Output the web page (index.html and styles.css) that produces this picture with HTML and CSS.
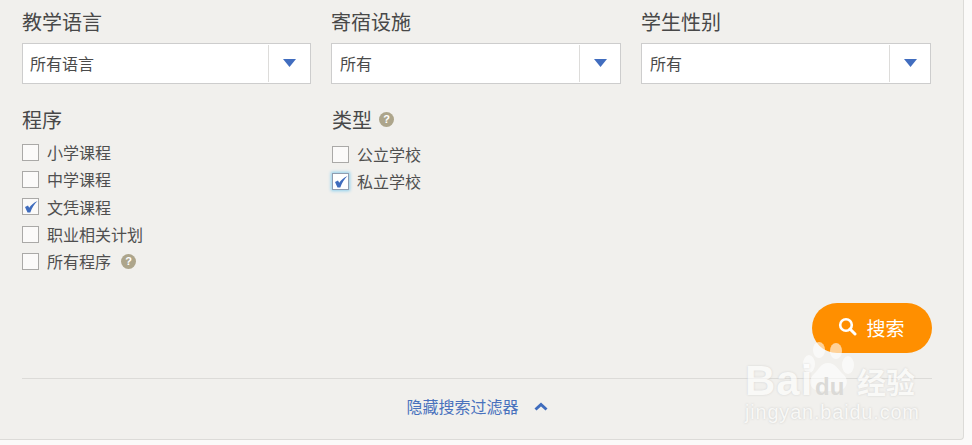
FILE: index.html
```html
<!DOCTYPE html>
<html lang="zh">
<head>
<meta charset="utf-8">
<title>搜索过滤器</title>
<link rel="stylesheet" href="styles.css">
</head>
<body>
<div class="panel">
  <div class="selects">
    <div class="field">
      <div class="label">教学语言</div>
      <div class="select"><span class="value">所有语言</span><span class="arrow"><svg width="13" height="8" viewBox="0 0 13 8"><path d="M0 0h13L6.500 8z"/></svg></span></div>
    </div>
    <div class="field">
      <div class="label">寄宿设施</div>
      <div class="select"><span class="value">所有</span><span class="arrow"><svg width="13" height="8" viewBox="0 0 13 8"><path d="M0 0h13L6.500 8z"/></svg></span></div>
    </div>
    <div class="field">
      <div class="label">学生性别</div>
      <div class="select"><span class="value">所有</span><span class="arrow"><svg width="13" height="8" viewBox="0 0 13 8"><path d="M0 0h13L6.500 8z"/></svg></span></div>
    </div>
  </div>
  <div class="groups">
    <div class="group">
      <div class="label glabel">程序</div>
      <div class="checks">
        <div class="check"><span class="box"></span>小学课程</div>
        <div class="check"><span class="box"></span>中学课程</div>
        <div class="check"><span class="box"><svg class="tick" width="14" height="13" viewBox="0 0 14 13"><path d="M1 7 4 5.500l1.200 2.300C7 5 10 2.500 13.500 1 10.500 4 8 7.500 6.300 12.500H3.500z"/></svg></span>文凭课程</div>
        <div class="check"><span class="box"></span>职业相关计划</div>
        <div class="check"><span class="box"></span>所有程序<span class="help helpm">?</span></div>
      </div>
    </div>
    <div class="group">
      <div class="label glabel typelabel">类型<span class="help helpt">?</span></div>
      <div class="checks">
        <div class="check"><span class="box"></span>公立学校</div>
        <div class="check"><span class="box focus"><svg class="tick" width="14" height="13" viewBox="0 0 14 13"><path d="M1 7 4 5.500l1.200 2.300C7 5 10 2.500 13.500 1 10.500 4 8 7.500 6.300 12.500H3.500z"/></svg></span>私立学校</div>
      </div>
    </div>
  </div>
  <div class="actions">
    <button class="search"><svg width="19" height="19" viewBox="0 0 19 19"><circle cx="8" cy="8" r="5.800" fill="none" stroke="#fff" stroke-width="2.600"/><path d="M12 12l5 5" stroke="#fff" stroke-width="3" stroke-linecap="round"/></svg><span>搜索</span></button>
  </div>
  <div class="footer">
    <a class="toggle">隐藏搜索过滤器<svg width="14" height="9" viewBox="0 0 14 9"><path d="M1.500 7.500 7 2.500l5.500 5" fill="none" stroke="#3f6cbd" stroke-width="3"/></svg></a>
  </div>
</div>
<div class="watermark">
  <svg class="paw" width="52" height="50" viewBox="0 0 52 50"><g fill="#fff" fill-opacity=".6"><ellipse cx="16" cy="8" rx="6" ry="8"/><ellipse cx="33" cy="9" rx="6" ry="8"/><ellipse cx="6" cy="22" rx="6" ry="9"/><ellipse cx="45" cy="23" rx="6" ry="9"/><path d="M25 21c8 0 10 7 16 12 6 6 2 16-7 16H17C8 49 4 39 10 33c6-5 7-12 15-12z"/></g></svg>
  <span class="wm-bai">Bai</span><span class="wm-du">du</span><span class="wm-cn">经验</span>
  <span class="wm-url">jingyan.baidu.com</span>
</div>
</body>
</html>
```
FILE: styles.css
```css
* { box-sizing: border-box; }
html, body { margin: 0; padding: 0; }
body {
  width: 972px;
  height: 445px;
  position: relative;
  overflow: hidden;
  background: #fbfaf9;
  font-family: "Noto Sans CJK SC", "Noto Sans", sans-serif;
  color: #4a4a4a;
}
.panel {
  width: 964px;
  height: 440px;
  background: #f1f0ed;
  border-right: 1px solid #dcdbd8;
  border-bottom: 1px solid #dcdbd8;
  border-bottom-right-radius: 4px;
  padding: 8px 31px 0 22px;
}
.selects {
  display: grid;
  grid-template-columns: 289px 290px 290px;
  column-gap: 20px;
}
.label {
  font-size: 20px;
  line-height: 28px;
  height: 35px;
  color: #484848;
}
.select {
  display: flex;
  height: 41px;
  background: #fff;
  border: 1px solid #cdcdcd;
  font-size: 16px;
}
.value {
  flex: 1;
  padding-left: 7px;
  line-height: 39px;
  color: #4a4a4a;
}
.arrow {
  width: 42px;
  margin: 1px 0;
  border-left: 1px solid #dddcda;
  display: flex;
  align-items: center;
  justify-content: center;
  padding-bottom: 1px;
}
.field + .field .value { padding-left: 8px; }
.field + .field .arrow { width: 41px; }
.arrow svg { fill: #416dbf; }
.groups {
  display: flex;
  margin-top: 22px;
}
.group { width: 310px; }
.glabel {
  height: 32.500px;
  line-height: 28px;
}
.typelabel {
  display: flex;
  align-items: flex-start;
  height: 34.500px;
}
.check {
  display: flex;
  align-items: center;
  height: 27.300px;
  font-size: 16px;
  color: #4f4f4f;
}
.box {
  width: 17px;
  height: 17px;
  margin-right: 8px;
  flex: none;
  background: #fbfaf9;
  border: 1px solid #aaa9a7;
  display: flex;
  align-items: center;
  justify-content: center;
}
.focus {
  border-color: #8f9db0;
  box-shadow: 0 0 3px 1px #8fd0ee;
  background: #fff;
}
.tick { fill: #3f6cbd; }
.help {
  width: 15px;
  height: 15px;
  border-radius: 50%;
  background: #ada58b;
  color: #fff;
  font: bold 11px/15px "Liberation Sans", sans-serif;
  text-align: center;
  flex: none;
}
.helpm { margin-left: 10px; }
.helpt { margin-left: 7px; margin-top: 6px; }
.actions {
  display: flex;
  justify-content: flex-end;
  margin-top: 28.500px;
}
.search {
  width: 120px;
  height: 50px;
  border: 0;
  border-radius: 25px;
  background: #ff8f00;
  color: #fff;
  font: 19px/50px "Noto Sans CJK SC", sans-serif;
  display: flex;
  align-items: center;
  justify-content: center;
  gap: 9px;
  padding: 0 1px 0 0;
}
.search svg { margin-top: -4px; }
.footer {
  margin-top: 25px;
  border-top: 1px solid #dcdbd8;
  height: 60px;
  text-align: center;
  padding-top: 15px;
}
.toggle {
  font-size: 16px;
  line-height: 24px;
  color: #4a72bd;
  display: inline-flex;
  align-items: center;
  gap: 15px;
}
.watermark {
  position: absolute;
  left: 745px;
  top: 340px;
  width: 190px;
  height: 90px;
  color: #fff;
  font-family: "Liberation Sans", sans-serif;
}
.paw { position: absolute; left: 58px; top: 2px; }
.wm-bai { position: absolute; left: 0; top: 18px; font-size: 42px; line-height: 46px; font-weight: bold; opacity: .6; letter-spacing: 1px; text-shadow: 0 0 2px #bbb; }
.wm-du { position: absolute; left: 70px; top: 32px; font-size: 24px; line-height: 30px; font-weight: bold; color: #dbdad7; }
.wm-cn { position: absolute; left: 112px; top: 20px; font: bold 29px/42px "Noto Sans CJK SC", sans-serif; opacity: .6; white-space: nowrap; text-shadow: 0 0 2px #bbb; }
.wm-url { position: absolute; left: 0; top: 60px; font-size: 20px; line-height: 24px; opacity: .55; letter-spacing: .8px; white-space: nowrap; text-shadow: 0 0 2px #aaa; }
```
